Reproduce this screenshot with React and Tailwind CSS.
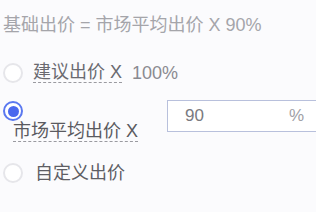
import React from "react";

const font = { fontFamily: '"Liberation Sans", "Noto Sans CJK SC", sans-serif' };

function Radio({ checked }) {
  return checked ? (
    <div className="w-[20px] h-[20px] rounded-full border-[2px] border-[#5a78f0] bg-white flex items-center justify-center shrink-0">
      <div className="w-[11px] h-[11px] rounded-full bg-[#4a68ee]" />
    </div>
  ) : (
    <div className="w-[20px] h-[20px] rounded-full border-[2px] border-[#e6e6ea] bg-white shrink-0" />
  );
}

export default function App() {
  return (
    <div
      className="w-[316px] h-[212px] bg-[#fbfbfd] overflow-hidden pl-[3px] pt-[16px] text-[18px]"
      style={font}
    >
      <div className="leading-[18px] text-[#a5a5aa] whitespace-nowrap">
        基础出价 = 市场平均出价 X 90%
      </div>

      <div className="mt-[29px] flex items-center h-[20px]">
        <Radio />
        <span className="ml-[10px] leading-[18px] text-[#6a6a70] border-b border-dashed border-[#9a9aa0] pb-[1px]">
          建议出价 X
        </span>
        <span className="ml-[10px] leading-[18px] text-[#8a8a90]">100%</span>
      </div>

      <div className="mt-[17px] flex">
        <div className="flex flex-col w-[164px] shrink-0">
          <div className="mt-[1px]">
            <Radio checked />
          </div>
          <span className="ml-[10px] mt-[1px] leading-[18px] text-[#5a5a60] border-b border-dashed border-[#9a9aa0] pb-[1px] self-start whitespace-nowrap">
            市场平均出价 X
          </span>
        </div>
        <div className="w-[160px] h-[32px] shrink-0 border border-[#b8c0dc] bg-white flex items-center justify-between pl-[17px] pr-[22px] text-[17px] text-[#7a7a80]">
          <span>90</span>
          <span className="text-[#a0a0a6]">%</span>
        </div>
      </div>

      <div className="mt-[21px] flex items-center h-[20px]">
        <Radio />
        <span className="ml-[12px] leading-[18px] text-[#5e5e64]">自定义出价</span>
      </div>
    </div>
  );
}
